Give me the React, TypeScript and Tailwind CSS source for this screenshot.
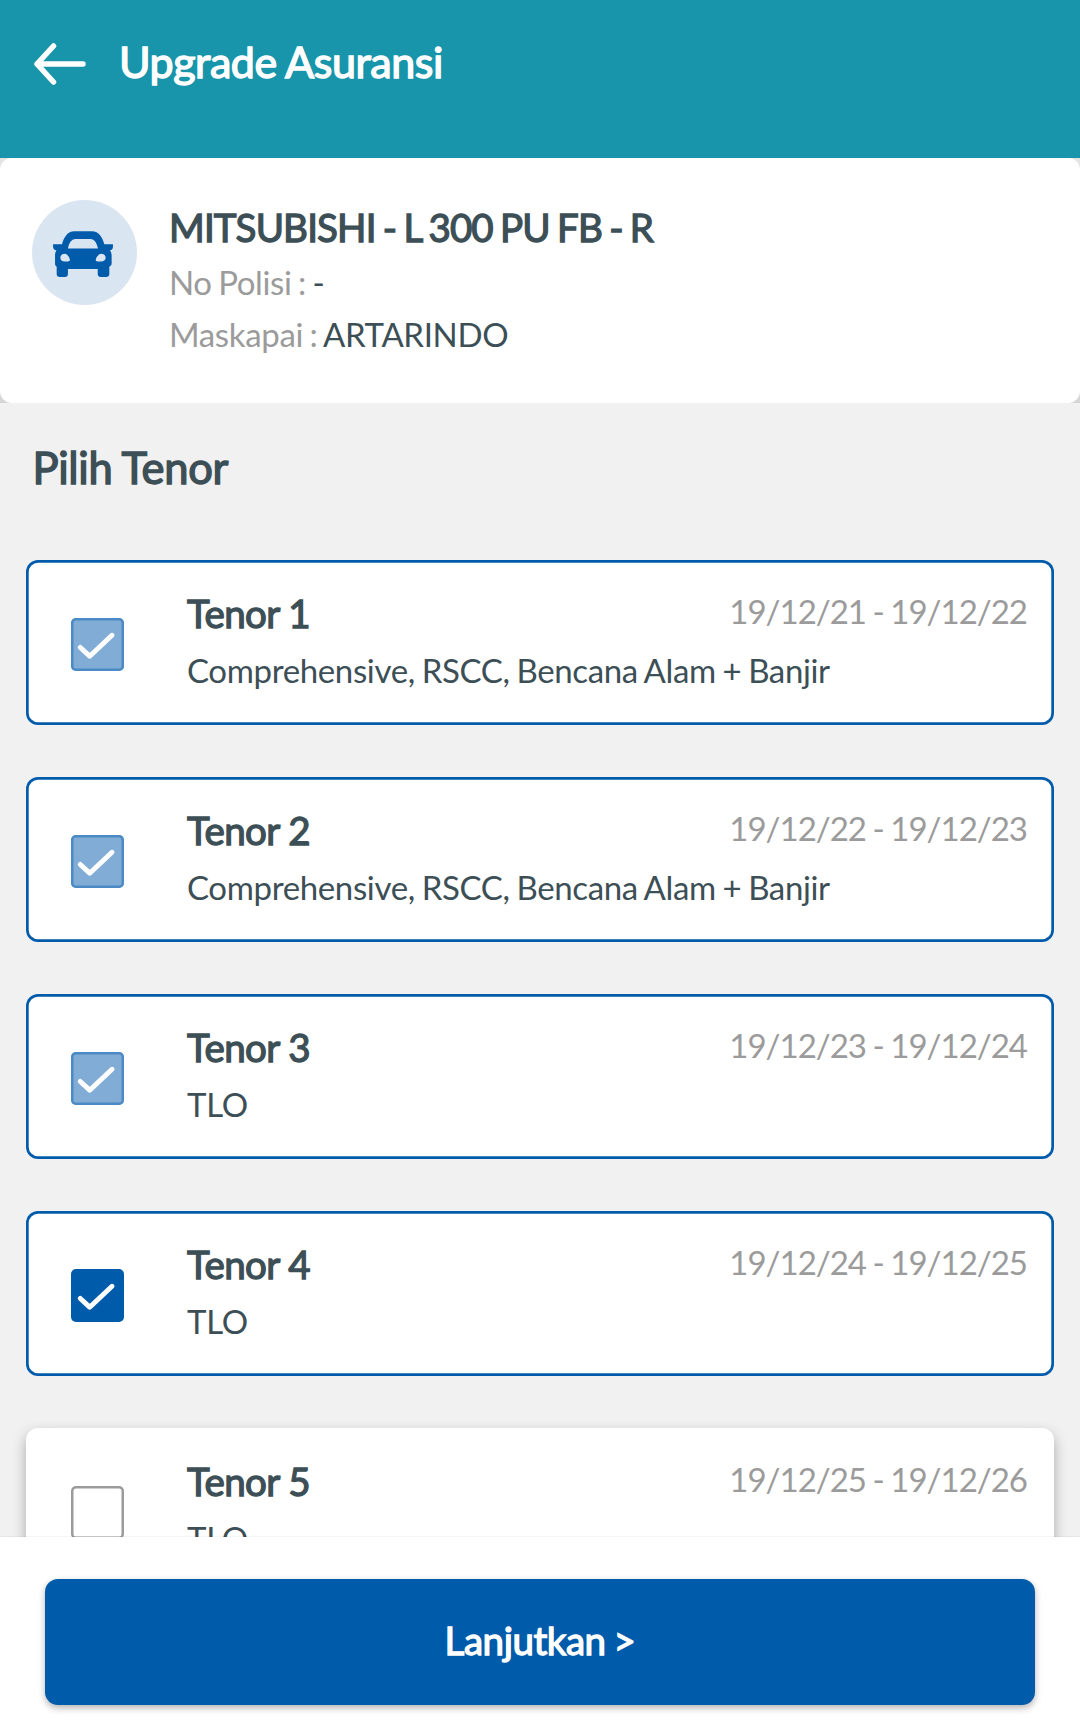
type Tenor = {
  name: string;
  period: string;
  coverage: string;
  state: "locked" | "checked" | "empty";
};

const tenors: Tenor[] = [
  { name: "Tenor 1", period: "19/12/21 - 19/12/22", coverage: "Comprehensive, RSCC, Bencana Alam + Banjir", state: "locked" },
  { name: "Tenor 2", period: "19/12/22 - 19/12/23", coverage: "Comprehensive, RSCC, Bencana Alam + Banjir", state: "locked" },
  { name: "Tenor 3", period: "19/12/23 - 19/12/24", coverage: "TLO", state: "locked" },
  { name: "Tenor 4", period: "19/12/24 - 19/12/25", coverage: "TLO", state: "checked" },
  { name: "Tenor 5", period: "19/12/25 - 19/12/26", coverage: "TLO", state: "empty" },
];

const boxStyles = {
  locked: "bg-[#80acd6] shadow-[inset_0_0_0_2.5px_#4c8ac6]",
  checked: "bg-[#005baa]",
  empty: "bg-white shadow-[inset_0_0_0_2.5px_#9b9b9b]",
};

function ArrowLeft() {
  return (
    <svg width="54" height="44" viewBox="0 0 54 44" fill="none" stroke="white" strokeWidth="5.5" strokeLinecap="round" strokeLinejoin="round">
      <path d="M50 22H4M20.5 4L4 22l16.5 18" />
    </svg>
  );
}

function Car() {
  return (
    <svg width="60" height="46" viewBox="159 242 181 139" fill="#005baa">
      <path
        fillRule="evenodd"
        d="M186 282C192 262 202 243 224 243H276C298 243 308 262 314 282H340V289C340 296 337 300 331 300C335 306 336 311 336 317V340C336 344 334 347 329 350V371C329 378 326 381 319 381H304C297 381 294 378 294 371V357H204V371C204 378 201 381 194 381H180C173 381 170 378 170 371V350C166 347 165 344 165 340V317C165 311 166 306 169 300C163 300 159 296 159 289V282ZM204 295H295C291 279 285 266 272 266H227C214 266 207 279 204 295ZM194 311C187 311 181 316 181 323C181 330 186 334 194 334H204C208 334 210 332 210 329C209 321 202 311 194 311ZM305 311C297 311 289 321 288 329C288 332 290 334 294 334H304C312 334 318 330 318 323C318 316 312 311 305 311Z"
      />
    </svg>
  );
}

function Checkbox({ state }: { state: Tenor["state"] }) {
  return (
    <div className={`h-[53px] w-[53px] shrink-0 rounded-[5px] ${boxStyles[state]}`}>
      {state !== "empty" && (
        <svg width="53" height="53" viewBox="0 0 53 53" fill="none" stroke="white" strokeWidth="5" strokeLinecap="round" strokeLinejoin="round">
          <path d="M9.3 29.5L18.7 38.2L41 17.3" />
        </svg>
      )}
    </div>
  );
}

function TenorCard({ tenor }: { tenor: Tenor }) {
  return (
    <div
      className={`flex h-[165px] shrink-0 rounded-xl bg-white pr-[27px] pl-[45px] ${
        tenor.state === "empty"
          ? "shadow-[0_6px_14px_rgba(0,0,0,0.3)]"
          : "shadow-[inset_0_0_0_2.7px_#005baa]"
      }`}
    >
      <div className="pt-[58px]">
        <Checkbox state={tenor.state} />
      </div>
      <div className="ml-[63px] flex-1 pt-[30px]">
        <div className="flex items-start justify-between">
          <h3 className="text-[38.5px] leading-[46px] tracking-[-0.6px] [-webkit-text-stroke:1.3px_currentColor]">{tenor.name}</h3>
          <span className="pt-[1px] text-[33px] leading-[40px] tracking-[-1px] text-[#9b9b9b] [word-spacing:-0.9px]">{tenor.period}</span>
        </div>
        <p className="mt-[14px] text-[33px] leading-[40px] tracking-[-0.35px] [word-spacing:-1.3px]">{tenor.coverage}</p>
      </div>
    </div>
  );
}

export default function App() {
  return (
    <div className="flex h-[1731px] w-[1080px] flex-col overflow-hidden bg-[#f1f1f1] font-['Lato',sans-serif] text-[#3d4f56]">
      <header className="flex h-[158px] shrink-0 items-start bg-[#1895aa] pl-[33px] text-white">
        <div className="pt-[42px]">
          <ArrowLeft />
        </div>
        <h1 className="ml-8 pt-[36px] text-[43px] leading-[52px] tracking-[-0.45px] [-webkit-text-stroke:1.4px_currentColor] [word-spacing:-0.8px]">
          Upgrade Asuransi
        </h1>
      </header>

      <div className="h-[245px] shrink-0 bg-linear-to-b from-[#e4e4e4] to-[#d6d6d6]">
        <section className="flex h-full rounded-xl bg-white pl-8">
          <div className="mt-[42px] h-[105px] w-[105px] rounded-full bg-[#d9e5f1] pt-[31px] pl-[21px]">
            <Car />
          </div>
          <div className="ml-8 pt-[46px]">
            <h2 className="text-[38.5px] leading-[46px] tracking-[-0.85px] [-webkit-text-stroke:1.3px_currentColor] [word-spacing:-1.8px]">
              MITSUBISHI - L 300 PU FB - R
            </h2>
            <p className="mt-[12px] text-[33px] leading-[40px] tracking-[-0.4px] [word-spacing:-1.4px]">
              <span className="text-[#9b9b9b]">No Polisi : </span>-
            </p>
            <p className="mt-[12px] text-[33px] leading-[40px] tracking-[-0.35px] [word-spacing:-1.5px]">
              <span className="text-[#9b9b9b]">Maskapai : </span>ARTARINDO
            </p>
          </div>
        </section>
      </div>

      <main className="flex min-h-0 flex-1 flex-col overflow-hidden px-[26px]">
        <h2 className="mt-[38px] ml-[6.5px] text-[43.5px] leading-[52px] tracking-[-0.3px] [-webkit-text-stroke:1.4px_currentColor] [word-spacing:-0.5px]">
          Pilih Tenor
        </h2>
        <div className="mt-[67px] flex flex-col gap-[52px]">
          {tenors.map((tenor) => (
            <TenorCard key={tenor.name} tenor={tenor} />
          ))}
        </div>
      </main>

      <footer className="z-10 h-[194px] shrink-0 bg-white px-[45px] pt-[42px] shadow-[0_-1px_1px_rgba(0,0,0,0.04)]">
        <button className="flex h-[126px] w-full items-start justify-center rounded-[13px] bg-[#005baa] pt-[38px] text-[38.5px] leading-[46px] tracking-[-0.45px] text-white shadow-[0_3px_7px_rgba(0,0,0,0.3)] [-webkit-text-stroke:1.3px_currentColor] [word-spacing:-1.5px]">
          Lanjutkan &gt;
        </button>
      </footer>
    </div>
  );
}
